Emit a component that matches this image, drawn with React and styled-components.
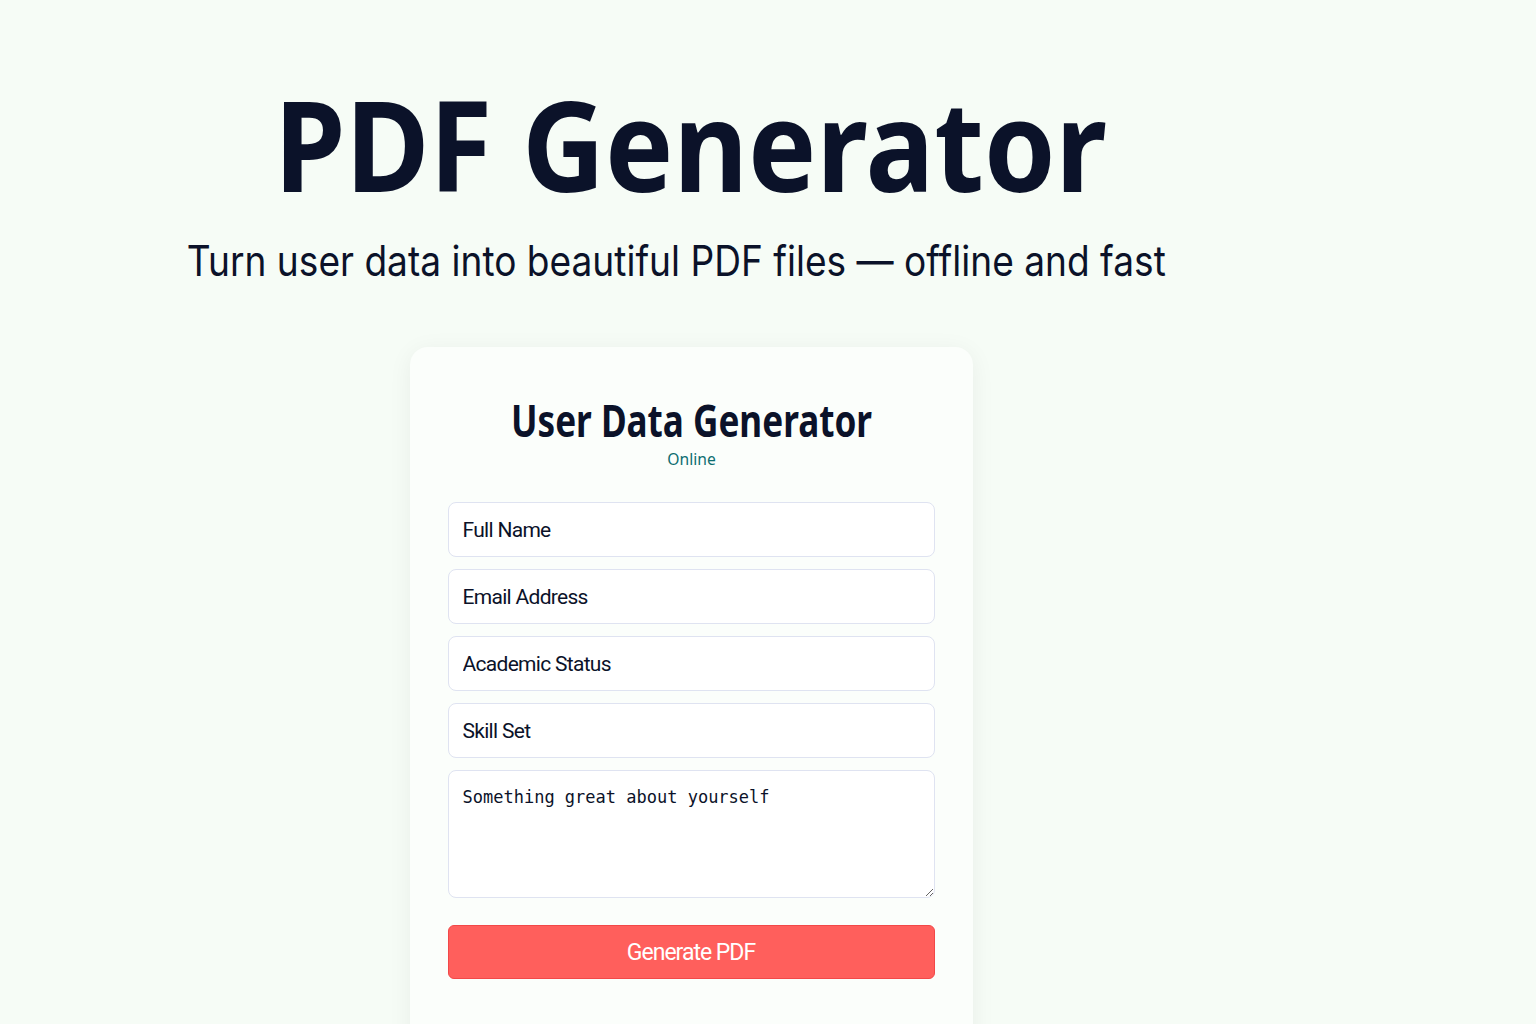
import React from "react";
import styled, { createGlobalStyle } from "styled-components";

const GlobalStyle = createGlobalStyle`
  html, body {
    margin: 0;
    padding: 0;
    background: #f6fcf6;
  }
  body {
    font-family: "Noto Sans", "Liberation Sans", sans-serif;
    color: #0b1229;
  }
`;

const Page = styled.div`
  width: 1382px;
  min-height: 1024px;
  display: flex;
  flex-direction: column;
  align-items: center;
  overflow: hidden;
`;

const Hero = styled.header`
  display: flex;
  flex-direction: column;
  align-items: center;
  padding-top: 74px;
`;

const Title = styled.h1`
  margin: 0;
  font-family: "Noto Sans", sans-serif;
  font-weight: 700;
  font-size: 126px;
  line-height: 1.1;
  color: #0b1229;
  transform: scaleX(0.91);
`;

const Subtitle = styled.p`
  margin: 22px 0 0 -30px;
  font-family: "Inter", "Noto Sans", sans-serif;
  font-weight: 400;
  font-size: 42px;
  color: #0b1229;
  transform: scaleX(0.883);
`;

const Card = styled.section`
  margin-top: 61px;
  width: 563px;
  box-sizing: border-box;
  padding: 48px 38px 80px;
  background: #fbfefb;
  border-radius: 18px;
  box-shadow: 0 4px 24px rgba(20, 40, 30, 0.06);
`;

const CardTitle = styled.h2`
  margin: 0;
  text-align: center;
  font-family: "Noto Sans", sans-serif;
  font-weight: 700;
  font-size: 45px;
  line-height: 1.1;
  color: #0b1229;
  transform: scaleX(0.78);
`;

const Status = styled.div`
  margin-top: 4px;
  text-align: center;
  font-family: "Noto Sans", sans-serif;
  font-size: 17px;
  line-height: 22px;
  color: #0c6d70;
  transform: scaleX(0.92);
`;

const Form = styled.form`
  display: flex;
  flex-direction: column;
  gap: 12px;
  margin-top: 32px;
`;

const Field = styled.input`
  height: 55px;
  box-sizing: border-box;
  padding: 0 14px;
  background: #ffffff;
  border: 1px solid #dfe3f1;
  border-radius: 8px;
  font-family: Roboto, "Liberation Sans", sans-serif;
  font-size: 21px;
  letter-spacing: -0.7px;
  color: #0b1229;
  outline: none;

  &::placeholder {
    color: #0b1229;
  }
`;

const Area = styled.textarea`
  height: 128px;
  box-sizing: border-box;
  padding: 16px 14px;
  background: #ffffff;
  border: 1px solid #dfe3f1;
  border-radius: 8px;
  font-family: "DejaVu Sans Mono", monospace;
  font-size: 17px;
  color: #0b1229;
  outline: none;
  resize: vertical;

  &::placeholder {
    color: #0b1229;
  }
`;

const Button = styled.button`
  margin-top: 15px;
  height: 54px;
  background: #ff5f5c;
  border: 1px solid #f24848;
  border-radius: 6px;
  color: #ffffff;
  font-family: Roboto, "Liberation Sans", sans-serif;
  font-size: 23px;
  letter-spacing: -1px;
  cursor: pointer;
`;

export default function App() {
  return (
    <>
      <GlobalStyle />
      <Page>
        <Hero>
          <Title>PDF Generator</Title>
          <Subtitle>Turn user data into beautiful PDF files — offline and fast</Subtitle>
        </Hero>
        <Card>
          <CardTitle>User Data Generator</CardTitle>
          <Status>Online</Status>
          <Form onSubmit={(e) => e.preventDefault()}>
            <Field placeholder="Full Name" />
            <Field placeholder="Email Address" />
            <Field placeholder="Academic Status" />
            <Field placeholder="Skill Set" />
            <Area placeholder="Something great about yourself" />
            <Button type="submit">Generate PDF</Button>
          </Form>
        </Card>
      </Page>
    </>
  );
}
